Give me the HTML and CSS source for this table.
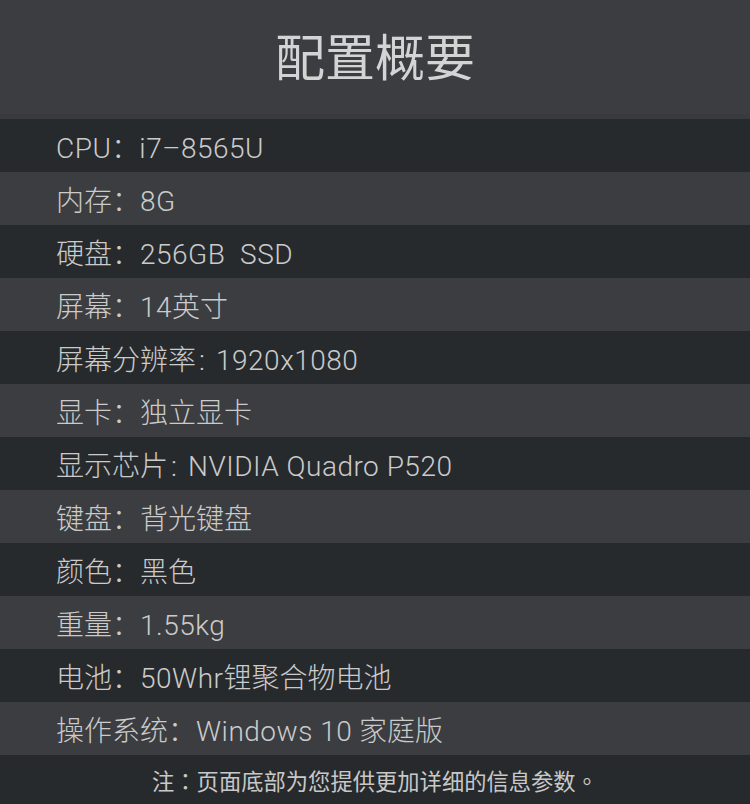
FILE: index.html
```html
<!DOCTYPE html>
<html lang="zh-CN">
<head>
<meta charset="utf-8">
<title>配置概要</title>
<link rel="stylesheet" href="styles.css">
</head>
<body>
<div class="page">
  <header class="head"><h1 class="title">配置概要</h1></header>
  <ul class="specs">
    <li class="row dark"><span class="en">CPU</span>：<span class="en">i7–8565U</span></li>
    <li class="row light">内存：<span class="en">8G</span></li>
    <li class="row dark">硬盘：<span class="en">256GB&nbsp; SSD</span></li>
    <li class="row light">屏幕：<span class="en">14</span>英寸</li>
    <li class="row dark">屏幕分辨率<span class="colon">:</span><span class="en">1920x1080</span></li>
    <li class="row light">显卡：独立显卡</li>
    <li class="row dark">显示芯片<span class="colon">:</span><span class="en">NVIDIA Quadro P520</span></li>
    <li class="row light">键盘：背光键盘</li>
    <li class="row dark">颜色：黑色</li>
    <li class="row light">重量：<span class="en">1.55kg</span></li>
    <li class="row dark">电池：<span class="en">50Whr</span>锂聚合物电池</li>
    <li class="row light">操作系统：<span class="en">Windows 10</span> 家庭版</li>
  </ul>
  <footer class="note" lang="zh-Hant">注：页面底部为您提供更加详细的信息参数。</footer>
</div>
</body>
</html>
```
FILE: styles.css
```css
html, body {
  margin: 0;
  padding: 0;
  background: #272a2d;
}
.page {
  width: 750px;
  height: 804px;
  overflow: hidden;
  font-family: "Roboto", "Noto Sans CJK SC", sans-serif;
  color: #cbcbcb;
}
.head {
  height: 119px;
  background: #3c3d41;
  display: flex;
  align-items: center;
  justify-content: center;
  box-shadow: inset 0 -5px 0 #393a3e;
}
.title {
  margin: 0;
  font-family: "Noto Sans CJK SC", sans-serif;
  font-weight: 400;
  font-size: 50px;
  color: #d4d4d4;
  padding-bottom: 12px;
}
.specs {
  list-style: none;
  margin: 0;
  padding: 0;
}
.row {
  box-sizing: border-box;
  height: 53px;
  padding: 6px 0 0 56px;
  line-height: 47px;
  font-size: 28px;
  font-weight: 300;
  white-space: pre;
}
.en {
  letter-spacing: 0.5px;
}
.colon {
  display: inline-block;
  width: 20px;
  padding-left: 3px;
  box-sizing: border-box;
}
.dark { background: #272a2d; }
.light { background: #3c3d40; }
.note {
  height: 49px;
  display: flex;
  align-items: center;
  justify-content: center;
  font-family: "Noto Sans CJK TC", sans-serif;
  font-size: 22.3px;
  color: #c8c8c8;
}
```
